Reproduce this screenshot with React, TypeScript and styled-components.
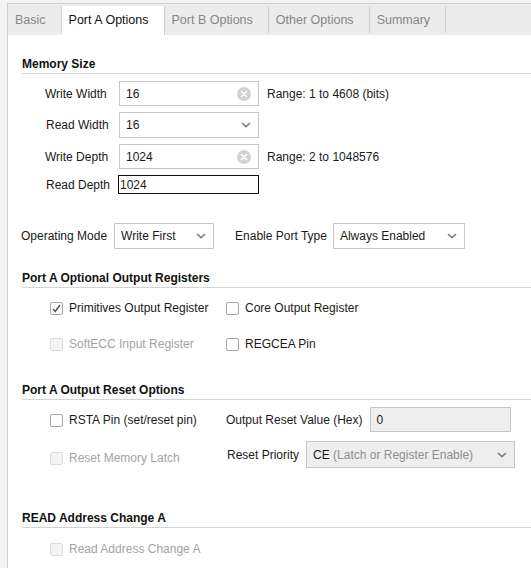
import React from "react";
import styled, { createGlobalStyle } from "styled-components";

const Global = createGlobalStyle`
  html, body { margin: 0; padding: 0; background: #f3f3f3; }
  body { font-family: "Liberation Sans", Arial, sans-serif; font-size: 12px; color: #1a1a1a; }
  #root { width: 531px; height: 568px; overflow: hidden; }
`;

const Frame = styled.div`
  height: 568px;
  box-sizing: border-box;
  padding: 3px 0 0 7px;
  background: #f3f3f3;
`;

const Panel = styled.div`
  height: 100%;
  box-sizing: border-box;
  border-top: 1px solid #cfcfcf;
  border-left: 1px solid #cfcfcf;
  background: #fff;
  display: flex;
  flex-direction: column;
`;

const TabBar = styled.div`
  display: flex;
  align-items: flex-end;
  height: 31px;
  flex: none;
  background: #ececec;
`;

const Tab = styled.div<{ $active?: boolean }>`
  height: ${(p) => (p.$active ? 29 : 27)}px;
  margin-bottom: ${(p) => (p.$active ? 0 : 2)}px;
  line-height: 29px;
  padding: 0 15px 0 7px;
  font-size: 12.5px;
  color: ${(p) => (p.$active ? "#111" : "#868686")};
  background: ${(p) => (p.$active ? "#fff" : "transparent")};
  border-right: 1px solid #d0d0d0;
  white-space: nowrap;
`;

const Content = styled.div`
  flex: 1;
  padding-left: 14px;
`;

const SectionHeader = styled.div<{ $top: number }>`
  margin-top: ${(p) => p.$top}px;
  font-weight: bold;
  font-size: 12px;
  line-height: 14px;
  padding-bottom: 2px;
  border-bottom: 1px solid #d4d4d4;
  color: #111;
`;

const FieldStack = styled.div`
  display: flex;
  flex-direction: column;
  gap: 6px;
  padding: 7px 0 0 23px;
`;

const FieldRow = styled.div`
  display: flex;
  align-items: center;
`;

const FieldLabel = styled.div<{ $w: number; $indent?: number }>`
  width: ${(p) => p.$w}px;
  box-sizing: border-box;
  padding-left: ${(p) => p.$indent ?? 0}px;
  flex: none;
  white-space: nowrap;
`;

const TextBox = styled.div<{ $w: number; $h?: number; $disabled?: boolean }>`
  width: ${(p) => p.$w}px;
  height: ${(p) => p.$h ?? 25}px;
  box-sizing: border-box;
  border: 1px solid #c6c6c6;
  background: ${(p) => (p.$disabled ? "#eeeeee" : "#fff")};
  display: flex;
  align-items: center;
  justify-content: space-between;
  padding: 0 7px 0 6px;
  flex: none;
  white-space: nowrap;
`;

const PlainBox = styled.div`
  width: 141px;
  height: 19px;
  box-sizing: border-box;
  border: 1px solid #111;
  padding-left: 1px;
  display: flex;
  align-items: center;
`;

const RangeText = styled.span`
  margin-left: 8px;
  white-space: nowrap;
`;

const InlineRow = styled.div`
  display: flex;
  align-items: center;
  margin: 29px 0 0 -1px;
`;

const Gap = styled.span<{ $w: number }>`
  display: inline-block;
  width: ${(p) => p.$w}px;
  flex: none;
`;

const Muted = styled.span`
  color: #8f8f8f;
`;

const CheckGrid = styled.div`
  display: grid;
  grid-template-columns: 176px auto;
  grid-auto-rows: 36px;
  align-items: center;
  padding: 2px 0 0 28px;
`;

const CheckItem = styled.label<{ $disabled?: boolean }>`
  display: flex;
  align-items: center;
  gap: 6px;
  white-space: nowrap;
  color: ${(p) => (p.$disabled ? "#a3a3a3" : "#1a1a1a")};
`;

const Box = styled.span<{ $disabled?: boolean }>`
  width: 13px;
  height: 13px;
  box-sizing: border-box;
  border: 1px solid ${(p) => (p.$disabled ? "#dadada" : "#a8a8a8")};
  border-radius: 2px;
  background: ${(p) => (p.$disabled ? "#f3f3f3" : "#fff")};
  display: flex;
  align-items: center;
  justify-content: center;
  flex: none;
`;

const ResetGrid = styled.div`
  display: grid;
  grid-template-columns: 176px auto;
  padding: 7px 0 0 28px;
`;

const LeftCol = styled.div`
  display: flex;
  flex-direction: column;
  gap: 12px;
`;

const RightCol = styled.div`
  display: flex;
  flex-direction: column;
  gap: 9px;
`;

const CheckRow = styled.div`
  height: 26px;
  display: flex;
  align-items: center;
`;

const RightRow = styled.div<{ $indent?: number }>`
  display: flex;
  align-items: center;
  gap: 7px;
  padding-left: ${(p) => p.$indent ?? 0}px;
  white-space: nowrap;
`;

const SingleCheck = styled.div`
  padding: 8px 0 0 28px;
`;

const ClearIcon = () => (
  <svg width="14" height="14" viewBox="0 0 14 14">
    <circle cx="7" cy="7" r="7" fill="#d2d2d2" />
    <path d="M4.5 4.5 L9.5 9.5 M9.5 4.5 L4.5 9.5" stroke="#fff" strokeWidth="1.6" strokeLinecap="round" />
  </svg>
);

const Chevron = () => (
  <svg width="10" height="6" viewBox="0 0 10 6">
    <path d="M1 1 L5 4.6 L9 1" fill="none" stroke="#7c7c7c" strokeWidth="1.6" />
  </svg>
);

const CheckMark = () => (
  <svg width="11" height="11" viewBox="0 0 11 11">
    <path d="M2 6 L4.3 8.4 L9 2" fill="none" stroke="#4a4a4a" strokeWidth="1.4" />
  </svg>
);

const Check = ({ label, checked, disabled }: { label: string; checked?: boolean; disabled?: boolean }) => (
  <CheckItem $disabled={disabled}>
    <Box $disabled={disabled}>{checked && <CheckMark />}</Box>
    {label}
  </CheckItem>
);

export default function App() {
  return (
    <>
      <Global />
      <Frame>
        <Panel>
          <TabBar>
            <Tab>Basic</Tab>
            <Tab $active>Port A Options</Tab>
            <Tab>Port B Options</Tab>
            <Tab>Other Options</Tab>
            <Tab>Summary</Tab>
          </TabBar>
          <Content>
            <SectionHeader $top={22}>Memory Size</SectionHeader>
            <FieldStack>
              <FieldRow>
                <FieldLabel $w={74}>Write Width</FieldLabel>
                <TextBox $w={140}>
                  16
                  <ClearIcon />
                </TextBox>
                <RangeText>Range: 1 to 4608 (bits)</RangeText>
              </FieldRow>
              <FieldRow>
                <FieldLabel $w={74} $indent={1}>Read Width</FieldLabel>
                <TextBox $w={140} $h={26}>
                  16
                  <Chevron />
                </TextBox>
              </FieldRow>
              <FieldRow>
                <FieldLabel $w={74}>Write Depth</FieldLabel>
                <TextBox $w={140}>
                  1024
                  <ClearIcon />
                </TextBox>
                <RangeText>Range: 2 to 1048576</RangeText>
              </FieldRow>
              <FieldRow>
                <FieldLabel $w={73} $indent={1}>Read Depth</FieldLabel>
                <PlainBox>1024</PlainBox>
              </FieldRow>
            </FieldStack>

            <InlineRow>
              Operating Mode
              <Gap $w={7} />
              <TextBox $w={100} $h={26}>
                Write First
                <Chevron />
              </TextBox>
              <Gap $w={21} />
              Enable Port Type
              <Gap $w={6} />
              <TextBox $w={132} $h={26}>
                Always Enabled
                <Chevron />
              </TextBox>
            </InlineRow>

            <SectionHeader $top={22}>Port A Optional Output Registers</SectionHeader>
            <CheckGrid>
              <Check label="Primitives Output Register" checked />
              <Check label="Core Output Register" />
              <Check label="SoftECC Input Register" disabled />
              <Check label="REGCEA Pin" />
            </CheckGrid>

            <SectionHeader $top={21}>Port A Output Reset Options</SectionHeader>
            <ResetGrid>
              <LeftCol>
                <CheckRow>
                  <Check label="RSTA Pin (set/reset pin)" />
                </CheckRow>
                <CheckRow>
                  <Check label="Reset Memory Latch" disabled />
                </CheckRow>
              </LeftCol>
              <RightCol>
                <RightRow>
                  Output Reset Value (Hex)
                  <TextBox $w={141} $disabled>
                    0
                  </TextBox>
                </RightRow>
                <RightRow $indent={1}>
                  Reset Priority
                  <TextBox $w={209} $h={27} $disabled>
                    <span>
                      CE <Muted>(Latch or Register Enable)</Muted>
                    </span>
                    <Chevron />
                  </TextBox>
                </RightRow>
              </RightCol>
            </ResetGrid>

            <SectionHeader $top={40}>READ Address Change A</SectionHeader>
            <SingleCheck>
              <CheckRow>
                <Check label="Read Address Change A" disabled />
              </CheckRow>
            </SingleCheck>
          </Content>
        </Panel>
      </Frame>
    </>
  );
}
